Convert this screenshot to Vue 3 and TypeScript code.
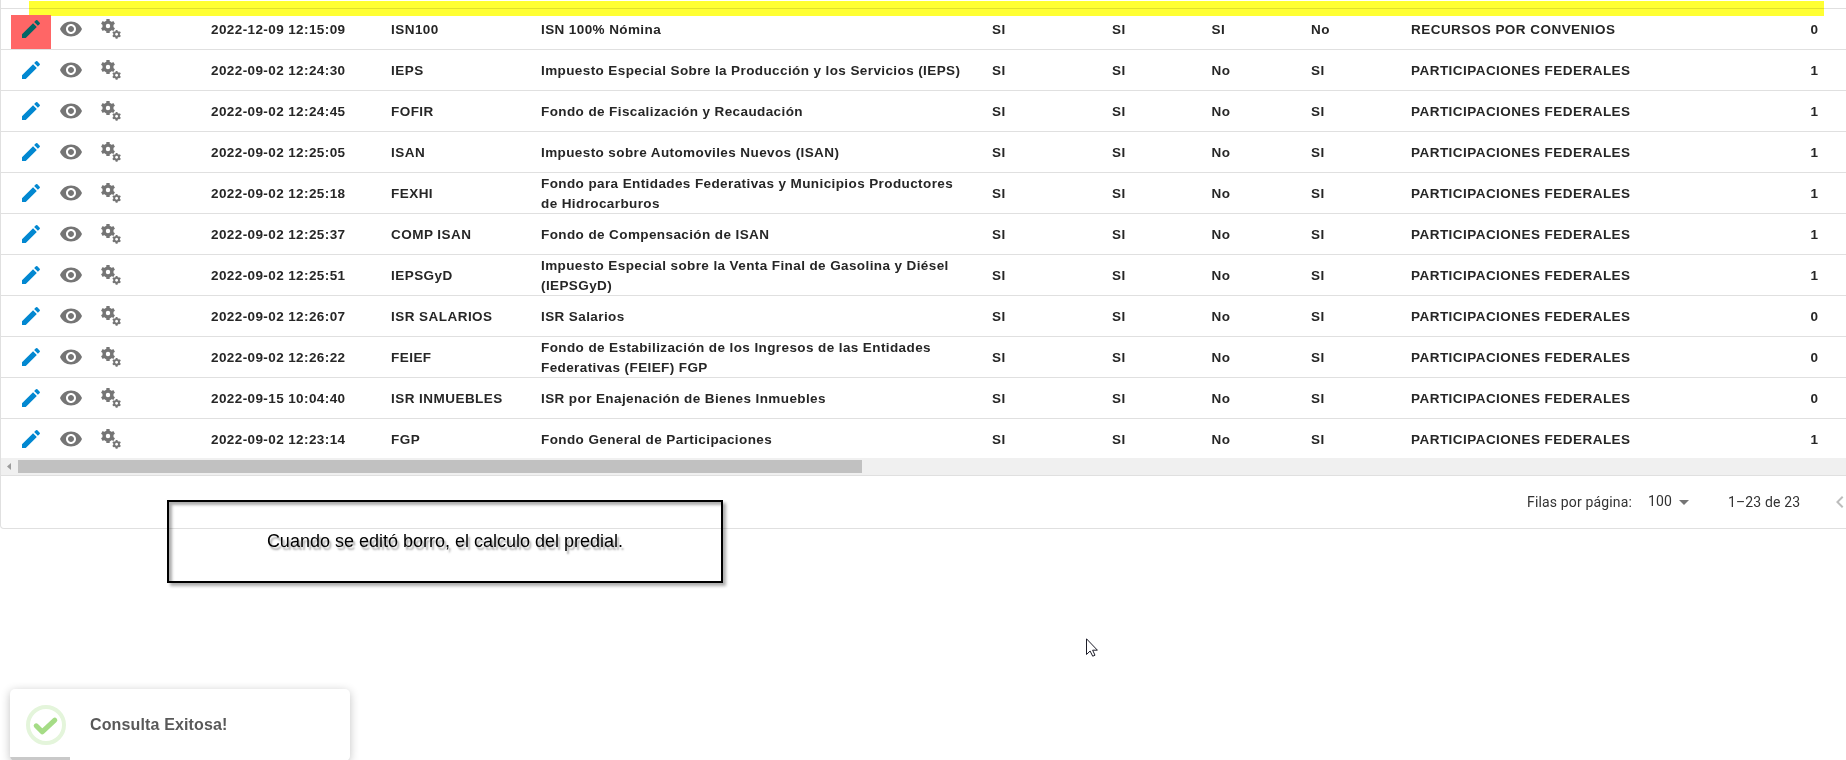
<script setup lang="ts">
interface Row {
  date: string
  code: string
  name: string
  flags: string[]
  group: string
  count: number
  marked?: boolean
}

const federal = 'PARTICIPACIONES FEDERALES'
const std = ['SI', 'SI', 'No', 'SI']

const rows: Row[] = [
  { date: '2022-12-09 12:15:09', code: 'ISN100', name: 'ISN 100% Nómina', flags: ['SI', 'SI', 'SI', 'No'], group: 'RECURSOS POR CONVENIOS', count: 0, marked: true },
  { date: '2022-09-02 12:24:30', code: 'IEPS', name: 'Impuesto Especial Sobre la Producción y los Servicios (IEPS)', flags: std, group: federal, count: 1 },
  { date: '2022-09-02 12:24:45', code: 'FOFIR', name: 'Fondo de Fiscalización y Recaudación', flags: std, group: federal, count: 1 },
  { date: '2022-09-02 12:25:05', code: 'ISAN', name: 'Impuesto sobre Automoviles Nuevos (ISAN)', flags: std, group: federal, count: 1 },
  { date: '2022-09-02 12:25:18', code: 'FEXHI', name: 'Fondo para Entidades Federativas y Municipios Productores de Hidrocarburos', flags: std, group: federal, count: 1 },
  { date: '2022-09-02 12:25:37', code: 'COMP ISAN', name: 'Fondo de Compensación de ISAN', flags: std, group: federal, count: 1 },
  { date: '2022-09-02 12:25:51', code: 'IEPSGyD', name: 'Impuesto Especial sobre la Venta Final de Gasolina y Diésel (IEPSGyD)', flags: std, group: federal, count: 1 },
  { date: '2022-09-02 12:26:07', code: 'ISR SALARIOS', name: 'ISR Salarios', flags: std, group: federal, count: 0 },
  { date: '2022-09-02 12:26:22', code: 'FEIEF', name: 'Fondo de Estabilización de los Ingresos de las Entidades Federativas (FEIEF) FGP', flags: std, group: federal, count: 0 },
  { date: '2022-09-15 10:04:40', code: 'ISR INMUEBLES', name: 'ISR por Enajenación de Bienes Inmuebles', flags: std, group: federal, count: 0 },
  { date: '2022-09-02 12:23:14', code: 'FGP', name: 'Fondo General de Participaciones', flags: std, group: federal, count: 1 },
]

const teeth = [0, 60, 120, 180, 240, 300]
</script>

<template>
  <main class="page">
    <section class="card">
      <div class="head-edge"></div>
      <div class="rows">
        <div v-for="row in rows" :key="row.code" class="row">
          <div class="actions">
            <span class="action" :class="{ marked: row.marked }">
              <svg viewBox="0 0 24 24" class="icon pencil">
                <path d="M3 17.25V21h3.75L17.81 9.94l-3.75-3.75L3 17.25zM20.71 7.04c.39-.39.39-1.02 0-1.41l-2.34-2.34a.9959.9959 0 0 0-1.41 0l-1.83 1.83 3.75 3.75 1.83-1.83z" />
              </svg>
            </span>
            <span class="action">
              <svg viewBox="0 0 24 24" class="icon">
                <path d="M12 4.5C7 4.5 2.73 7.61 1 12c1.73 4.39 6 7.5 11 7.5s9.27-3.11 11-7.5c-1.73-4.39-6-7.5-11-7.5zM12 17c-2.76 0-5-2.24-5-5s2.24-5 5-5 5 2.24 5 5-2.24 5-5 5zm0-8c-1.66 0-3 1.34-3 3s1.34 3 3 3 3-1.34 3-3-1.34-3-3-3z" />
              </svg>
            </span>
            <span class="action">
              <svg viewBox="0 0 24 24" class="icon">
                <g transform="translate(9 9)">
                  <circle r="3.9" class="ring" stroke-width="3.4" />
                  <rect v-for="a in teeth" :key="a" x="-1.7" y="-7.1" width="3.4" height="3" rx=".4" :transform="`rotate(${a})`" />
                </g>
                <g transform="translate(17.6 17.3)">
                  <circle r="2.4" class="ring" stroke-width="1.9" />
                  <rect v-for="a in teeth" :key="a" x="-1" y="-4.4" width="2" height="2" rx=".3" :transform="`rotate(${a})`" />
                </g>
              </svg>
            </span>
          </div>
          <div class="cell">{{ row.date }}</div>
          <div class="cell">{{ row.code }}</div>
          <div class="cell">{{ row.name }}</div>
          <div v-for="(flag, i) in row.flags" :key="i" class="cell">{{ flag }}</div>
          <div class="cell">{{ row.group }}</div>
          <div class="cell count">{{ row.count }}</div>
        </div>
      </div>
      <div class="scrollbar">
        <svg class="arrow" viewBox="0 0 4 7"><path d="M4 0v7L0 3.5z" /></svg>
        <div class="thumb"></div>
      </div>
      <footer class="footer">
        <span class="label">Filas por página:</span>
        <span class="size">100</span>
        <svg class="caret" viewBox="0 0 10 5"><path d="M0 0h10L5 5z" /></svg>
        <span class="range">1–23 de 23</span>
        <svg class="prev" viewBox="0 0 24 24"><path d="M15.41 7.41L14 6l-6 6 6 6 1.41-1.41L10.83 12z" /></svg>
      </footer>
    </section>

    <div class="marker"></div>
    <div class="note">Cuando se editó borro, el calculo del predial.</div>

    <svg class="cursor" viewBox="0 0 12 19">
      <path d="M.5 .8v15.7l3.6-3.5 2.6 5.2 2.3-1-2.4-5h4.8z" />
    </svg>

    <div class="toast">
      <svg class="check" viewBox="0 0 40 40">
        <circle cx="20" cy="20" r="18" />
        <path d="M10.2 20.8l6 6L28.8 15.2" />
      </svg>
      <span>Consulta Exitosa!</span>
      <div class="progress"></div>
    </div>
  </main>
</template>

<style>
html,
body {
  margin: 0;
  overflow: hidden;
  background: #fff;
}
</style>

<style scoped>
.page {
  position: relative;
  width: 1846px;
  height: 760px;
  overflow: hidden;
  background: #fff;
  font-family: "Liberation Sans", Arial, sans-serif;
}
.card {
  box-sizing: border-box;
  width: 1900px;
  height: 529px;
  border: 1px solid #e0e0e0;
  border-top: 0;
  border-radius: 0 0 4px 4px;
}
.head-edge {
  height: 8px;
  border-bottom: 1px solid #e0e0e0;
}
.row {
  box-sizing: border-box;
  display: grid;
  grid-template-columns: 210px 180px 150px 451px 120px 99.5px 99.5px 100px 340px 67.5px;
  align-items: center;
  height: 41px;
  border-bottom: 1px solid #e0e0e0;
}
.row:last-child {
  height: 39px;
  border-bottom: 0;
}
.cell {
  padding-top: 1px;
  font-size: 13.5px;
  font-weight: 700;
  line-height: 20px;
  letter-spacing: 0.4px;
  color: #262626;
}
.cell:nth-child(4) {
  padding-right: 22px;
}
.cell:nth-child(9),
.cell:nth-child(3) {
  letter-spacing: 0.46px;
}
.count {
  text-align: right;
}
.actions {
  display: flex;
  align-self: stretch;
  padding-left: 10px;
}
.action {
  display: flex;
  align-items: center;
  justify-content: center;
  width: 40px;
  height: 40px;
}
.marked {
  position: relative;
  z-index: 2;
  box-sizing: border-box;
  height: 34px;
  margin-top: 6px;
  padding-bottom: 6px;
  background: #f66;
}
.icon {
  display: block;
  flex: none;
  width: 24px;
  height: 24px;
  fill: #757575;
}
.pencil {
  fill: #0288d1;
}
.marked .pencil {
  fill: #016666;
}
.ring {
  fill: none;
  stroke: #757575;
}
.scrollbar {
  display: flex;
  align-items: center;
  height: 17px;
  background: #f0f0f0;
  border-bottom: 1px solid #e0e0e0;
}
.arrow {
  width: 4px;
  height: 7px;
  margin: 0 7px 0 6px;
  fill: #9c9c9c;
}
.thumb {
  width: 844px;
  height: 13px;
  background: #c1c1c1;
}
.footer {
  display: flex;
  align-items: center;
  height: 51px;
  padding-left: 1526px;
  font-family: Roboto, sans-serif;
  font-size: 14px;
  line-height: 20px;
  letter-spacing: 0.15px;
  color: #333;
}
.label {
  width: 121px;
}
.size {
  width: 31px;
  margin-bottom: 2px;
}
.caret {
  width: 10px;
  height: 5px;
  margin-top: 2px;
  fill: #757575;
}
.range {
  width: 100px;
  margin-left: 39px;
}
.prev {
  width: 24px;
  height: 24px;
  fill: #bdbdbd;
}
.marker {
  position: absolute;
  left: 29px;
  top: 1px;
  width: 1795px;
  height: 15px;
  background: #ffff33;
  mix-blend-mode: multiply;
}
.note {
  position: absolute;
  left: 167px;
  top: 500px;
  box-sizing: border-box;
  width: 556px;
  height: 83px;
  border: 2px solid #000;
  box-shadow: 3px 3px 3px rgba(0, 0, 0, 0.32), inset 3px 3px 3px rgba(0, 0, 0, 0.32);
  font-size: 18px;
  line-height: 79px;
  text-align: center;
  color: #000;
  text-shadow: 2px 3px 2px rgba(0, 0, 0, 0.35);
}
.cursor {
  position: absolute;
  left: 1086px;
  top: 638px;
  width: 12px;
  height: 19px;
  fill: #fff;
  stroke: #1c1c28;
  stroke-width: 1;
}
.toast {
  position: absolute;
  left: 10px;
  top: 689px;
  box-sizing: border-box;
  display: flex;
  align-items: center;
  width: 340px;
  height: 72px;
  padding-left: 16px;
  overflow: hidden;
  border-radius: 5px;
  background: #fff;
  box-shadow: 0 2px 10px rgba(0, 0, 0, 0.24);
  font-size: 16px;
  font-weight: 700;
  letter-spacing: 0.14px;
  color: #595959;
}
.check {
  width: 40px;
  height: 40px;
  margin-right: 24px;
  fill: none;
}
.check circle {
  stroke: #e4f5db;
  stroke-width: 4;
}
.check path {
  stroke: #a5dc86;
  stroke-width: 5;
  stroke-linecap: round;
  stroke-linejoin: round;
}
.progress {
  position: absolute;
  left: 0;
  bottom: 0;
  width: 60px;
  height: 4px;
  background: #c9c9c9;
}
</style>
